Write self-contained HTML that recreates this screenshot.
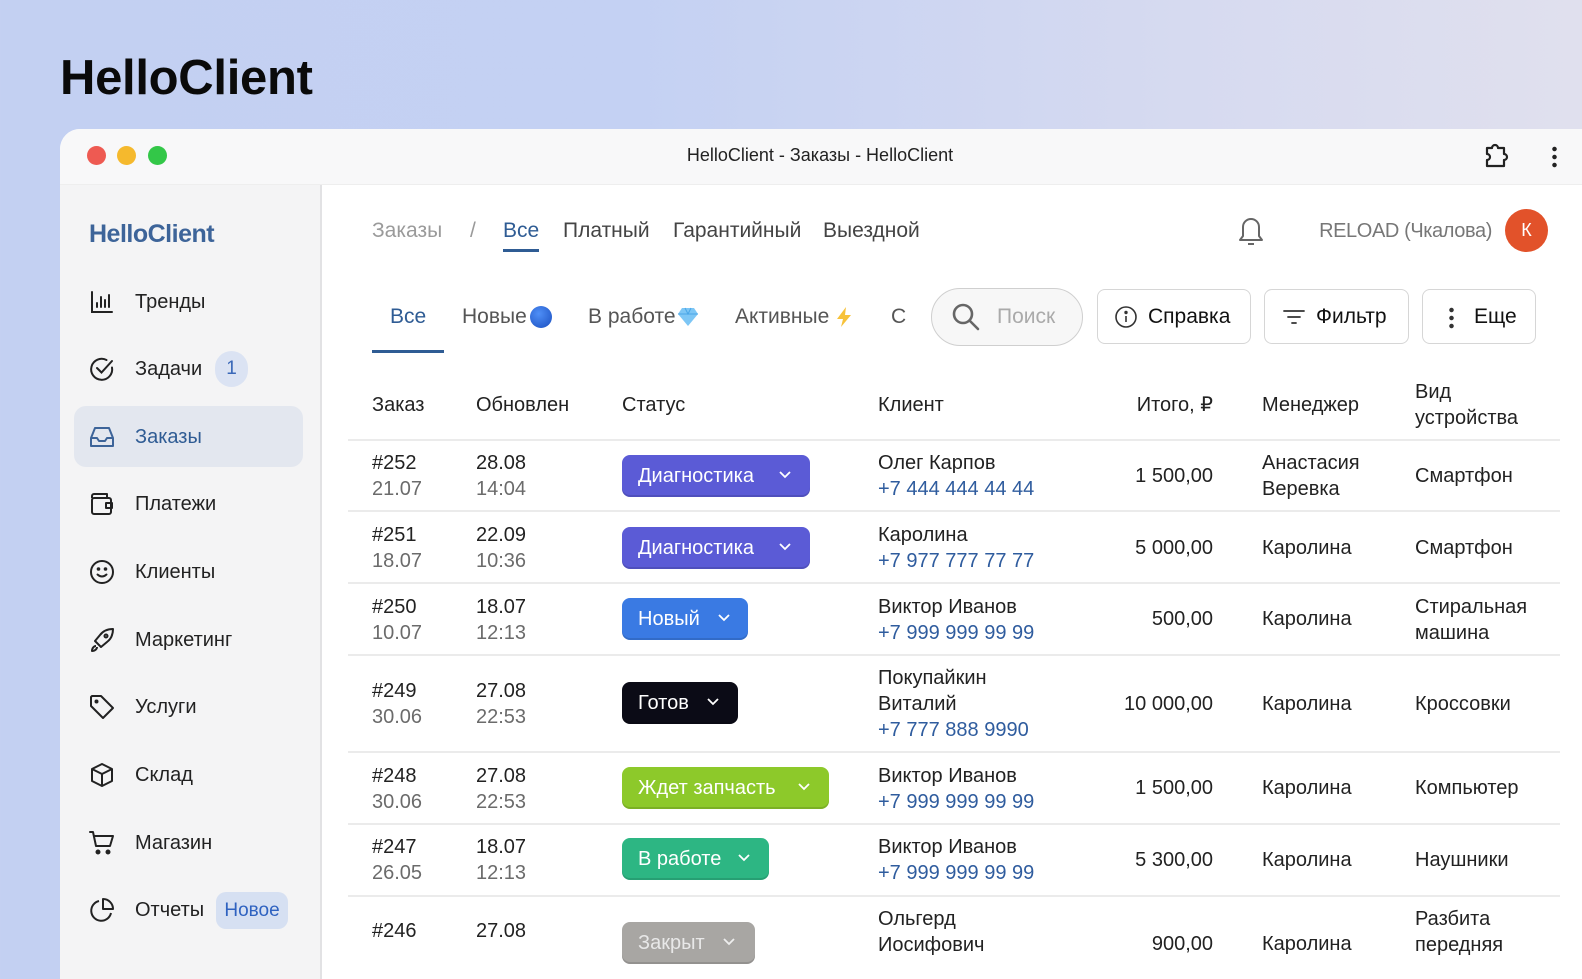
<!DOCTYPE html>
<html><head><meta charset="utf-8"><style>
*{margin:0;padding:0;box-sizing:border-box}
body{width:1582px;height:950px;overflow:hidden;font-family:"Liberation Sans","Noto Sans CJK SC",sans-serif;background:linear-gradient(90deg,#c3d0f2 0%,#c4d1f3 40%,#d6daf0 75%,#e0e0ee 100%);position:relative;color:#1d1d1f}
.a{position:absolute;white-space:nowrap}
.t{position:absolute;white-space:nowrap;font-size:20px;line-height:26px;color:#222}
.g{color:#6b6b6b}
.b{color:#2f5c94}
.ph{color:#2f5c9e}
.win{position:absolute;left:60px;top:129px;width:1560px;height:850px;background:#fff;border-radius:20px 0 0 0;overflow:hidden}
.bar{position:absolute;left:0;top:0;width:100%;height:56px;background:#f8f8f9;border-bottom:1px solid #eee}
.side{position:absolute;left:0;top:56px;width:262px;height:800px;background:#f4f4f5;border-right:2px solid #e2e2e4}
.dot{position:absolute;top:17px;width:19px;height:19px;border-radius:50%}
.btn{position:absolute;border:1.5px solid #d6d6d6;border-radius:8px;background:#fff;height:55px;top:289px}
.badge{position:absolute;left:622px;height:42px;border-radius:8px;color:#fff;font-size:20px;line-height:42px;padding-left:16px;box-shadow:inset 0 -2px 0 rgba(0,0,0,.12)}
.badge svg{position:absolute;top:15px}
.hl{position:absolute;left:348px;width:1212px;height:2px;background:#ebebeb}
.r{text-align:right}
</style></head><body>
<div class="a" style="left:60px;top:50px;font-size:49px;font-weight:bold;line-height:56px;color:#0a0a0a;letter-spacing:-0.3px">HelloClient</div>

<div class="win">
 <div class="bar">
  <div class="dot" style="left:27px;background:#ee5a52"></div>
  <div class="dot" style="left:57px;background:#f5b92d"></div>
  <div class="dot" style="left:88px;background:#33c748"></div>
  <div class="a" style="left:0;width:1520px;text-align:center;top:15px;font-size:18px;line-height:22px;color:#222">HelloClient - Заказы - HelloClient</div>
  <svg class="a" style="left:1422px;top:13px" width="28" height="28" viewBox="0 0 28 28" fill="none" stroke="#222" stroke-width="2.2" stroke-linejoin="round"><path d="M5 6h5a3 3 0 0 1 6 0h6v6a3 3 0 0 1 0 6v6H5v-6a3 3 0 0 0 0-6z"/></svg>
  <div class="a" style="left:1492px;top:16px;width:5px;height:24px;background:radial-gradient(circle,#222 2px,transparent 2.5px) 0 0/5px 8px"></div>
 </div>
 <div class="side"></div>
</div>

<!-- sidebar -->
<div class="a" style="left:89px;top:219px;font-size:25px;font-weight:bold;color:#3d6499;line-height:30px;letter-spacing:-0.5px">HelloClient</div>
<div class="a" style="left:74px;top:406px;width:229px;height:61px;background:#e3e7ef;border-radius:12px"></div>

<svg class="a" style="left:89px;top:289px" width="26" height="26" viewBox="0 0 26 26" fill="none" stroke="#222" stroke-width="2" stroke-linecap="round"><path d="M3 3v20h20M8 18v-4M12 18V8M16 18v-7M20 18V6"/></svg>
<div class="t" style="left:135px;top:289px">Тренды</div>
<svg class="a" style="left:89px;top:356px" width="26" height="26" viewBox="0 0 26 26" fill="none" stroke="#222" stroke-width="2" stroke-linecap="round"><path d="M23 11.5A10.5 10.5 0 1 1 17.5 4"/><path d="M8 12l4.5 4.5L23 5"/></svg>
<div class="t" style="left:135px;top:356px">Задачи</div>
<div class="a" style="left:215px;top:351px;width:33px;height:36px;border-radius:18px;background:#dbe3f3;color:#3a68b8;font-size:19px;line-height:36px;text-align:center">1</div>
<svg class="a" style="left:89px;top:424px" width="26" height="26" viewBox="0 0 26 26" fill="none" stroke="#3d6499" stroke-width="2" stroke-linejoin="round"><path d="M2 14l4-10h14l4 10v8H2z"/><path d="M2 14h6l2 3h6l2-3h6"/></svg>
<div class="t b" style="left:135px;top:424px">Заказы</div>
<svg class="a" style="left:89px;top:491px" width="26" height="26" viewBox="0 0 26 26" fill="none" stroke="#222" stroke-width="2" stroke-linejoin="round"><path d="M3 7V5a2 2 0 0 1 2-2h13v4"/><rect x="3" y="7" width="19" height="16" rx="2"/><path d="M23 12h-6v5h6z"/></svg>
<div class="t" style="left:135px;top:491px">Платежи</div>
<svg class="a" style="left:89px;top:559px" width="26" height="26" viewBox="0 0 26 26" fill="none" stroke="#222" stroke-width="2" stroke-linecap="round"><circle cx="13" cy="13" r="11"/><path d="M8.5 15.5q4.5 4 9 0"/><circle cx="9.5" cy="10" r=".8" fill="#222"/><circle cx="16.5" cy="10" r=".8" fill="#222"/></svg>
<div class="t" style="left:135px;top:559px">Клиенты</div>
<svg class="a" style="left:89px;top:627px" width="26" height="26" viewBox="0 0 26 26" fill="none" stroke="#222" stroke-width="2" stroke-linejoin="round"><path d="M9 17l-3-3 5-6c3-4 8-6 13-6 0 5-2 10-6 13l-6 5-3-3z"/><path d="M7 19c-2 0-4 2-4 5 3 0 5-2 5-4"/><circle cx="17" cy="9" r="1.5"/></svg>
<div class="t" style="left:135px;top:627px">Маркетинг</div>
<svg class="a" style="left:89px;top:694px" width="26" height="26" viewBox="0 0 26 26" fill="none" stroke="#222" stroke-width="2" stroke-linejoin="round"><path d="M2 3v9l12 12 10-10L12 2H3z"/><circle cx="7.5" cy="7.5" r="1" fill="#222"/></svg>
<div class="t" style="left:135px;top:694px">Услуги</div>
<svg class="a" style="left:89px;top:762px" width="26" height="26" viewBox="0 0 26 26" fill="none" stroke="#222" stroke-width="2" stroke-linejoin="round"><path d="M13 2l10 5v12l-10 5-10-5V7z"/><path d="M3 7l10 5 10-5M13 12v12"/></svg>
<div class="t" style="left:135px;top:762px">Склад</div>
<svg class="a" style="left:89px;top:830px" width="26" height="26" viewBox="0 0 26 26" fill="none" stroke="#222" stroke-width="2" stroke-linejoin="round" stroke-linecap="round"><path d="M1 2h3l3 14h14l3-10H6"/><circle cx="9" cy="22" r="1.5" fill="#222"/><circle cx="19" cy="22" r="1.5" fill="#222"/></svg>
<div class="t" style="left:135px;top:830px">Магазин</div>
<svg class="a" style="left:89px;top:897px" width="26" height="26" viewBox="0 0 26 26" fill="none" stroke="#222" stroke-width="2" stroke-linejoin="round"><path d="M10 4A10 10 0 1 0 22 16"/><path d="M14 2a10 10 0 0 1 10 10H14z"/></svg>
<div class="t" style="left:135px;top:897px">Отчеты</div>
<div class="a" style="left:216px;top:892px;width:72px;height:37px;border-radius:10px;background:#d6e0f2;color:#2f62c0;font-size:19px;line-height:37px;text-align:center">Новое</div>

<!-- top nav -->
<div class="t" style="left:372px;top:218px;color:#9a9a9a;font-size:21px">Заказы</div>
<div class="t" style="left:470px;top:218px;color:#9a9a9a;font-size:21px">/</div>
<div class="t b" style="left:503px;top:218px;font-size:21px">Все</div>
<div class="a" style="left:503px;top:249px;width:36px;height:3px;background:#2f5c94"></div>
<div class="t" style="left:563px;top:218px;font-size:21px;color:#444">Платный</div>
<div class="t" style="left:673px;top:218px;font-size:21px;color:#444">Гарантийный</div>
<div class="t" style="left:823px;top:218px;font-size:21px;color:#444">Выездной</div>
<svg class="a" style="left:1237px;top:216px" width="28" height="32" viewBox="0 0 28 32" fill="none" stroke="#666" stroke-width="2" stroke-linejoin="round"><path d="M14 3a8 8 0 0 1 8 8v9l3 4H3l3-4v-9a8 8 0 0 1 8-8z"/><path d="M11 28h6"/></svg>
<div class="t r" style="left:1290px;width:202px;top:218px;font-size:20px;color:#777;letter-spacing:-0.4px">RELOAD (Чкалова)</div>
<div class="a" style="left:1505px;top:209px;width:43px;height:43px;border-radius:50%;background:#e2522a;color:#fff;font-size:18px;line-height:43px;text-align:center">К</div>

<!-- tabs -->
<div class="t b" style="left:390px;top:304px;font-size:21px">Все</div>
<div class="a" style="left:372px;top:350px;width:72px;height:3px;background:#2f5c94"></div>
<div class="t" style="left:462px;top:304px;font-size:21px;color:#555">Новые</div>
<div class="a" style="left:530px;top:306px;width:22px;height:22px;border-radius:50%;background:radial-gradient(circle at 40% 35%,#4f8ff7,#1a4fc0)"></div>
<div class="t" style="left:588px;top:304px;font-size:21px;color:#555">В работе</div>
<svg class="a" style="left:677px;top:307px" width="22" height="20" viewBox="0 0 22 20"><path d="M5 1h12l4 6-10 12L1 7z" fill="#7dc6f5"/><path d="M1 7h20M8 1l3 6 3-6" stroke="#4aa6e8" fill="none"/></svg>
<div class="t" style="left:735px;top:304px;font-size:21px;color:#555">Активные</div>
<svg class="a" style="left:835px;top:306px" width="18" height="22" viewBox="0 0 18 22"><path d="M11 1L2 13h6l-2 8 10-12h-6z" fill="#f7c23a"/></svg>
<div class="t" style="left:891px;top:304px;font-size:21px;color:#555">С</div>

<div class="a" style="left:931px;top:288px;width:152px;height:58px;border-radius:29px;border:1.5px solid #cfcfcf;background:#f7f7f7"></div>
<svg class="a" style="left:951px;top:302px" width="30" height="30" viewBox="0 0 30 30" fill="none" stroke="#666" stroke-width="2.6" stroke-linecap="round"><circle cx="12" cy="12" r="9"/><path d="M19 19l8 8"/></svg>
<div class="t" style="left:997px;top:304px;font-size:21px;color:#aaa">Поиск</div>

<div class="btn" style="left:1097px;width:154px"></div>
<svg class="a" style="left:1114px;top:305px" width="24" height="24" viewBox="0 0 24 24" fill="none" stroke="#333" stroke-width="1.6"><circle cx="12" cy="12" r="10"/><path d="M12 11v6"/><circle cx="12" cy="7.5" r=".9" fill="#333"/></svg>
<div class="t" style="left:1148px;top:304px;font-size:21px;color:#111">Справка</div>
<div class="btn" style="left:1264px;width:145px"></div>
<svg class="a" style="left:1282px;top:307px" width="24" height="20" viewBox="0 0 24 20" fill="none" stroke="#333" stroke-width="1.8" stroke-linecap="round"><path d="M2 4h20M6 10h12M10 16h4"/></svg>
<div class="t" style="left:1316px;top:304px;font-size:21px;color:#111">Фильтр</div>
<div class="btn" style="left:1422px;width:114px"></div>
<div class="a" style="left:1449px;top:306px;width:5px;height:24px;background:radial-gradient(circle,#333 2px,transparent 2.5px) 0 0/5px 8px"></div>
<div class="t" style="left:1474px;top:304px;font-size:21px;color:#111">Еще</div>

<!-- table header -->
<div class="t" style="left:372px;top:392px">Заказ</div>
<div class="t" style="left:476px;top:392px">Обновлен</div>
<div class="t" style="left:622px;top:392px">Статус</div>
<div class="t" style="left:878px;top:392px">Клиент</div>
<div class="t r" style="left:1100px;width:113px;top:392px">Итого, ₽</div>
<div class="t" style="left:1262px;top:392px">Менеджер</div>
<div class="t" style="left:1415px;top:379px">Вид<br>устройства</div>
<div class="hl" style="top:439px"></div>

<!-- row1 -->
<div class="t" style="left:372px;top:450px">#252<br><span class="g">21.07</span></div>
<div class="t" style="left:476px;top:450px">28.08<br><span class="g">14:04</span></div>
<div class="badge" style="top:455px;width:188px;background:#5b5bd6">Диагностика<svg style="left:156px" width="14" height="10" viewBox="0 0 14 10" fill="none" stroke="#fff" stroke-width="1.8"><path d="M2 2l5 5 5-5"/></svg></div>
<div class="t" style="left:878px;top:450px">Олег Карпов<br><span class="ph">+7 444 444 44 44</span></div>
<div class="t r" style="left:1080px;width:133px;top:463px">1 500,00</div>
<div class="t" style="left:1262px;top:450px">Анастасия<br>Веревка</div>
<div class="t" style="left:1415px;top:463px">Смартфон</div>
<div class="hl" style="top:510px"></div>

<!-- row2 -->
<div class="t" style="left:372px;top:522px">#251<br><span class="g">18.07</span></div>
<div class="t" style="left:476px;top:522px">22.09<br><span class="g">10:36</span></div>
<div class="badge" style="top:527px;width:188px;background:#5b5bd6">Диагностика<svg style="left:156px" width="14" height="10" viewBox="0 0 14 10" fill="none" stroke="#fff" stroke-width="1.8"><path d="M2 2l5 5 5-5"/></svg></div>
<div class="t" style="left:878px;top:522px">Каролина<br><span class="ph">+7 977 777 77 77</span></div>
<div class="t r" style="left:1080px;width:133px;top:535px">5 000,00</div>
<div class="t" style="left:1262px;top:535px">Каролина</div>
<div class="t" style="left:1415px;top:535px">Смартфон</div>
<div class="hl" style="top:582px"></div>

<!-- row3 -->
<div class="t" style="left:372px;top:594px">#250<br><span class="g">10.07</span></div>
<div class="t" style="left:476px;top:594px">18.07<br><span class="g">12:13</span></div>
<div class="badge" style="top:598px;width:126px;background:#3a7ae3">Новый<svg style="left:95px" width="14" height="10" viewBox="0 0 14 10" fill="none" stroke="#fff" stroke-width="1.8"><path d="M2 2l5 5 5-5"/></svg></div>
<div class="t" style="left:878px;top:594px">Виктор Иванов<br><span class="ph">+7 999 999 99 99</span></div>
<div class="t r" style="left:1080px;width:133px;top:606px">500,00</div>
<div class="t" style="left:1262px;top:606px">Каролина</div>
<div class="t" style="left:1415px;top:594px">Стиральная<br>машина</div>
<div class="hl" style="top:654px"></div>

<!-- row4 -->
<div class="t" style="left:372px;top:678px">#249<br><span class="g">30.06</span></div>
<div class="t" style="left:476px;top:678px">27.08<br><span class="g">22:53</span></div>
<div class="badge" style="top:682px;width:116px;background:#0b0b16">Готов<svg style="left:84px" width="14" height="10" viewBox="0 0 14 10" fill="none" stroke="#fff" stroke-width="1.8"><path d="M2 2l5 5 5-5"/></svg></div>
<div class="t" style="left:878px;top:665px">Покупайкин<br>Виталий<br><span class="ph">+7 777 888 9990</span></div>
<div class="t r" style="left:1080px;width:133px;top:691px">10 000,00</div>
<div class="t" style="left:1262px;top:691px">Каролина</div>
<div class="t" style="left:1415px;top:691px">Кроссовки</div>
<div class="hl" style="top:751px"></div>

<!-- row5 -->
<div class="t" style="left:372px;top:763px">#248<br><span class="g">30.06</span></div>
<div class="t" style="left:476px;top:763px">27.08<br><span class="g">22:53</span></div>
<div class="badge" style="top:767px;width:207px;background:#8dc92a">Ждет запчасть<svg style="left:175px" width="14" height="10" viewBox="0 0 14 10" fill="none" stroke="#fff" stroke-width="1.8"><path d="M2 2l5 5 5-5"/></svg></div>
<div class="t" style="left:878px;top:763px">Виктор Иванов<br><span class="ph">+7 999 999 99 99</span></div>
<div class="t r" style="left:1080px;width:133px;top:775px">1 500,00</div>
<div class="t" style="left:1262px;top:775px">Каролина</div>
<div class="t" style="left:1415px;top:775px">Компьютер</div>
<div class="hl" style="top:823px"></div>

<!-- row6 -->
<div class="t" style="left:372px;top:834px">#247<br><span class="g">26.05</span></div>
<div class="t" style="left:476px;top:834px">18.07<br><span class="g">12:13</span></div>
<div class="badge" style="top:838px;width:147px;background:#2db683">В работе<svg style="left:115px" width="14" height="10" viewBox="0 0 14 10" fill="none" stroke="#fff" stroke-width="1.8"><path d="M2 2l5 5 5-5"/></svg></div>
<div class="t" style="left:878px;top:834px">Виктор Иванов<br><span class="ph">+7 999 999 99 99</span></div>
<div class="t r" style="left:1080px;width:133px;top:847px">5 300,00</div>
<div class="t" style="left:1262px;top:847px">Каролина</div>
<div class="t" style="left:1415px;top:847px">Наушники</div>
<div class="hl" style="top:895px"></div>

<!-- row7 -->
<div class="t" style="left:372px;top:918px">#246</div>
<div class="t" style="left:476px;top:918px">27.08</div>
<div class="badge" style="top:922px;width:133px;background:#a8a6a3;color:#e8e8e8">Закрыт<svg style="left:100px" width="14" height="10" viewBox="0 0 14 10" fill="none" stroke="#eee" stroke-width="1.8"><path d="M2 2l5 5 5-5"/></svg></div>
<div class="t" style="left:878px;top:906px">Ольгерд<br>Иосифович</div>
<div class="t r" style="left:1080px;width:133px;top:931px">900,00</div>
<div class="t" style="left:1262px;top:931px">Каролина</div>
<div class="t" style="left:1415px;top:906px">Разбита<br>передняя</div>
</body></html>
